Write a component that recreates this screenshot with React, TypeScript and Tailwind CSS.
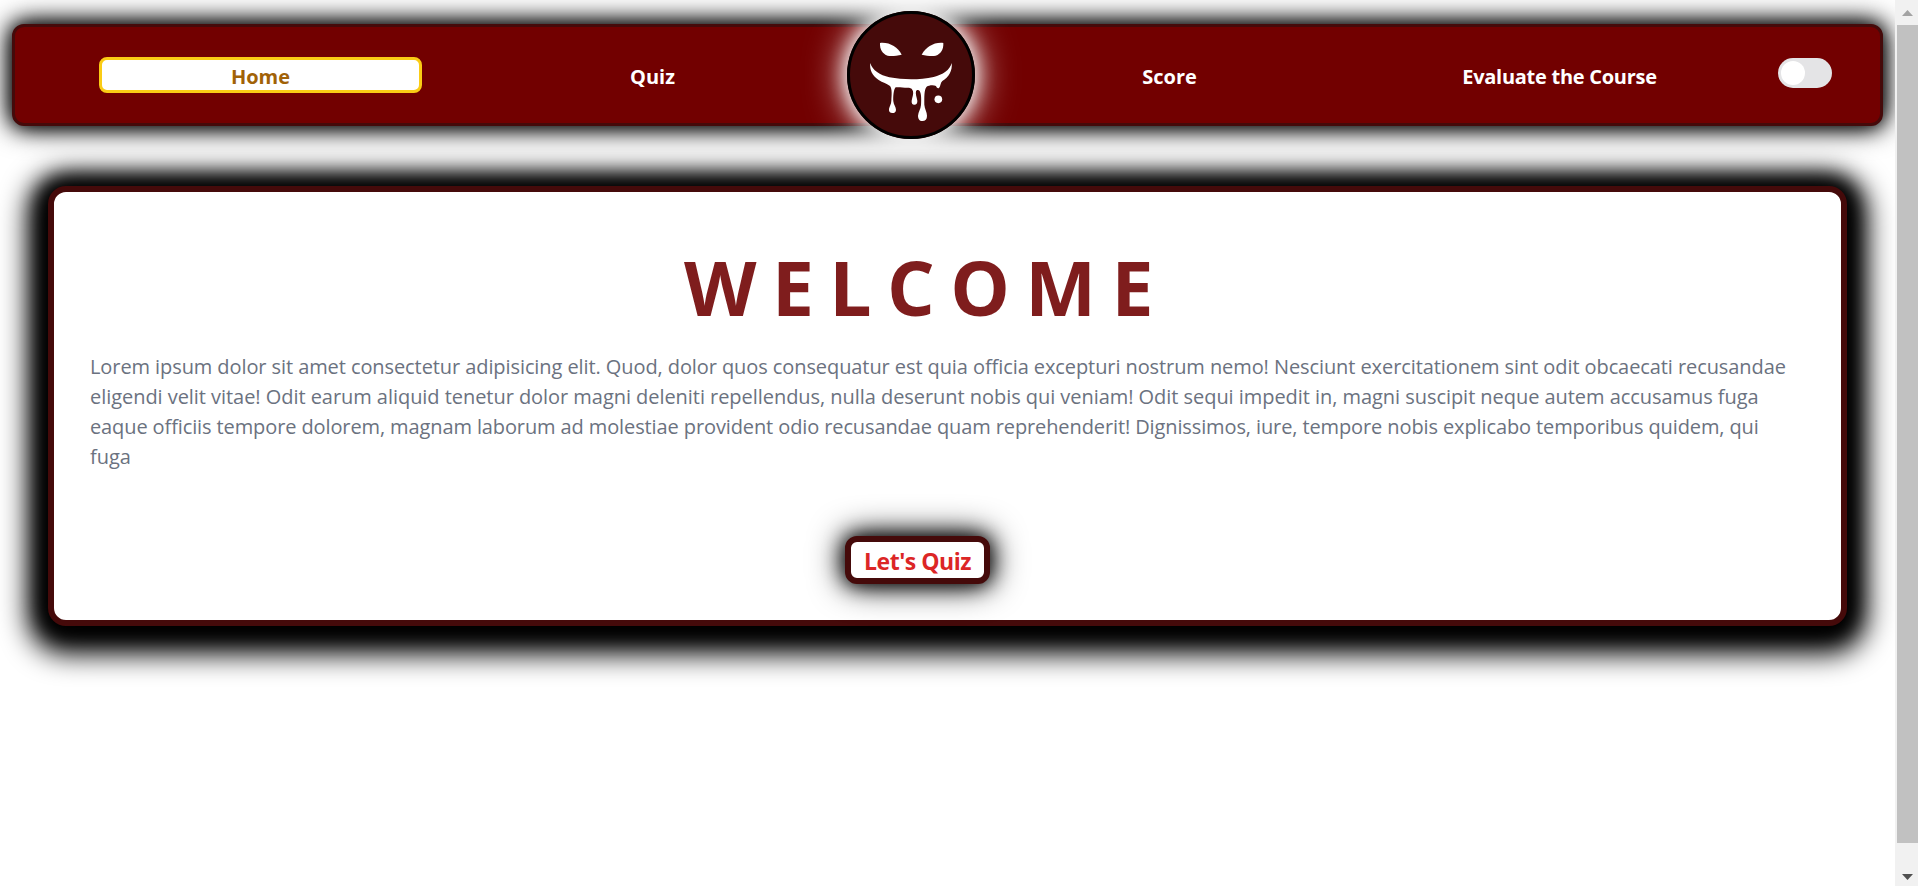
import React from "react";

const lines = [
  { text: "Lorem ipsum dolor sit amet consectetur adipisicing elit. Quod, dolor quos consequatur est quia officia excepturi nostrum nemo! Nesciunt exercitationem sint odit obcaecati recusandae", cls: "tracking-[-0.085px]" },
  { text: "eligendi velit vitae! Odit earum aliquid tenetur dolor magni deleniti repellendus, nulla deserunt nobis qui veniam! Odit sequi impedit in, magni suscipit neque autem accusamus fuga", cls: "tracking-[-0.048px]" },
  { text: "eaque officiis tempore dolorem, magnam laborum ad molestiae provident odio recusandae quam reprehenderit! Dignissimos, iure, tempore nobis explicabo temporibus quidem, qui", cls: "tracking-[-0.11px]" },
  { text: "fuga", cls: "tracking-[0px]" },
];

const itemBase =
  "flex h-9 w-[323px] items-center justify-center rounded-lg border-[3px] pt-[3px] text-xl font-bold leading-none";

function Logo() {
  return (
    <div className="mx-[33px] size-32 shrink-0 rounded-full bg-[#450a0a] shadow-[0_0_20px_#fff,0_0_40px_#fff]">
      <svg viewBox="111 33 384 384" className="size-32">
        <circle cx="303" cy="225" r="187.5" fill="#450a0a" stroke="#000" strokeWidth="9" />
        <g fill="#fff">
          <path d="M210 129C238 126 263 141 275 164C260 167 244 170 233 167C217 162 209 148 210 129Z" />
          <path d="M400 129C372 126 348 141 335 164C350 167 366 170 377 167C393 162 401 148 400 129Z" />
          <path d="M181 189C187 211 210 225 238 232C281 240 330 240 371 231C398 224 420 210 425 189C428 212 416 232 397 243C391 248 392 259 387 264C383 267 379 261 378 258C371 254 357 255 350 260C342 268 343 292 343 314C344 327 351 336 351 347C351 358 346 363 337 363C328 363 324 356 324 347C325 336 332 328 333 315C334 298 334 281 329 273C326 269 320 269 318 274C316 282 320 292 322 302C323 309 319 314 313 314C307 314 304 309 305 302C307 292 311 282 309 274C307 267 304 264 297 263C283 264 267 260 257 262C251 268 249 290 250 304C251 315 258 321 258 329C258 336 254 339 247 339C240 339 236 335 237 327C238 319 244 313 244 302C245 286 247 267 240 258C232 251 217 248 206 240C187 227 178 210 181 189Z" />
          <circle cx="385" cy="298" r="11.5" />
        </g>
      </svg>
    </div>
  );
}

function Scrollbar() {
  return (
    <div className="flex w-[23px] shrink-0 flex-col bg-[#f1f1f1]">
      <div className="flex h-[25px] justify-center pt-[10px] pl-[2px]">
        <svg width="11" height="6" viewBox="0 0 11 6">
          <path d="M5.5 0L11 6H0Z" fill="#a3a3a3" />
        </svg>
      </div>
      <div className="ml-0.5 h-[818px] bg-[#c1c1c1]" />
      <div className="flex flex-1 items-start justify-center pt-[31px] pl-[2px]">
        <svg width="11" height="6" viewBox="0 0 11 6">
          <path d="M0 0H11L5.5 6Z" fill="#505050" />
        </svg>
      </div>
    </div>
  );
}

export default function App() {
  return (
    <div className="flex h-[886px] w-full overflow-hidden bg-white font-['Open_Sans','Noto_Sans',sans-serif]">
      <div className="flex min-w-0 flex-1 flex-col overflow-hidden pt-6">
        <header className="ml-3 flex h-[102px] w-[1871px] items-center rounded-xl border-[3px] border-[#450a0a] bg-[#720000] pl-[84px] text-white shadow-[0_0_20px_#000,0_0_30px_#000]">
          <nav className="flex items-center">
            <a className={`${itemBase} mr-[69px] border-[#facc15] bg-white text-[#a16207]`}>Home</a>
            <a className={`${itemBase} border-transparent`}>Quiz</a>
            <Logo />
            <a className={`${itemBase} mr-[67px] border-transparent`}>Score</a>
            <a className={`${itemBase} border-transparent tracking-[-0.27px]`}>Evaluate the Course</a>
          </nav>
          <button className="mb-1 ml-[57px] flex h-[30px] w-[54px] items-center rounded-full bg-[#e4e4e6] pl-[3px]">
            <span className="size-6 rounded-full bg-white" />
          </button>
        </header>
        <main className="mt-[60px] ml-12 flex h-[440px] w-[1799px] flex-col rounded-[18px] border-[6px] border-[#450a0a] bg-white pl-9 shadow-[0_0_20px_8px_#000,0_8px_28px_20px_#000]">
          <h1 className="mt-[50px] ml-[594px] h-[90px] whitespace-nowrap text-[75px] leading-[90px] font-bold tracking-[15.4px] text-[#7f1d1d]">
            WELCOME
          </h1>
          <p className="mt-5 text-xl leading-[30px] font-normal whitespace-nowrap text-[#6b7280]">
            {lines.map((l) => (
              <span key={l.text} className={`block ${l.cls}`}>{l.text}</span>
            ))}
          </p>
          <button className="mt-16 ml-[755px] flex h-12 w-[145px] items-center justify-center rounded-xl border-[6px] border-[#450a0a] bg-white pt-0.5 text-[23px] leading-none font-bold tracking-[-0.5px] whitespace-nowrap text-[#dc2626] shadow-[0_0_20px_#000,0_0_35px_#000]">
            Let's Quiz
          </button>
        </main>
      </div>
      <Scrollbar />
    </div>
  );
}
